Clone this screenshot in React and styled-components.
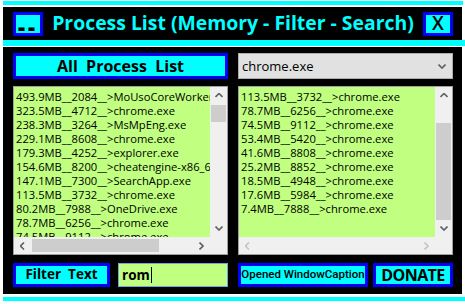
import styled, { createGlobalStyle } from 'styled-components';

const GlobalStyle = createGlobalStyle`
  html, body {
    margin: 0;
    padding: 0;
    background: #ffffff;
  }
  body {
    font-family: "Open Sans", "Noto Sans", sans-serif;
    overflow: hidden;
  }
`;

const CYAN = '#00ffff';
const BLUE = '#0000ff';
const GREEN = '#c0ff80';

const Page = styled.div`
  padding-top: 1px;
  width: 465px;
  height: 304px;
  box-sizing: border-box;
`;

const Stripe = styled.div`
  height: ${(p) => p.$h}px;
  margin-left: 3px;
  margin-right: ${(p) => p.$right || 0}px;
  margin-top: ${(p) => p.$top || 0}px;
  margin-bottom: ${(p) => p.$gap || 0}px;
  background: ${CYAN};
`;

const Frame = styled.div`
  width: 459px;
  margin-left: 3px;
  background: #000;
`;

const TitleBar = styled(Frame)`
  height: 33px;
  display: flex;
  align-items: center;
  padding: 0 9px 0 10px;
  box-sizing: border-box;
`;

const TitleButton = styled.div`
  width: 30px;
  height: 24px;
  box-sizing: border-box;
  border: 3px solid ${BLUE};
  background: ${CYAN};
  display: flex;
  align-items: center;
  justify-content: center;
  color: #000;
  font-weight: ${(p) => p.$weight || 700};
  font-size: ${(p) => p.$size}px;
  line-height: 1;
  padding-top: ${(p) => p.$pt || 0}px;
  letter-spacing: ${(p) => p.$ls || 0}px;
  font-family: "Open Sans", sans-serif;
`;

const Title = styled.div`
  flex: 1;
  text-align: center;
  color: ${CYAN};
  font-weight: 700;
  font-size: 19.4px;
  line-height: 1;
  white-space: nowrap;
  padding-bottom: 1px;
`;

const Body = styled(Frame)`
  height: 247px;
  box-sizing: border-box;
  padding: 6px 9px 6px 10px;
  display: grid;
  grid-template-columns: 215px 215px;
  grid-template-rows: 26px 169px 25px;
  column-gap: 10px;
  row-gap: 7px;
`;

const BlueButton = styled.div`
  box-sizing: border-box;
  border: 3px solid ${BLUE};
  background: ${CYAN};
  color: #000;
  display: flex;
  align-items: center;
  justify-content: center;
  white-space: pre;
  font-weight: ${(p) => p.$weight || 700};
  font-size: ${(p) => p.$size}px;
  letter-spacing: ${(p) => p.$ls || 0}px;
  font-family: ${(p) => p.$font || '"Open Sans", sans-serif'};
  width: ${(p) => (p.$w ? `${p.$w}px` : 'auto')};
  line-height: 1;
`;

const Combo = styled.div`
  box-sizing: border-box;
  border: 1px solid #adadad;
  background: #e1e1e1;
  display: flex;
  align-items: center;
  justify-content: space-between;
  padding: 0 6px 0 3px;
  font-size: 13px;
  font-weight: 500;
  color: #000;
`;

const ListBox = styled.div`
  box-sizing: border-box;
  border: 1px solid #a0a0a0;
  display: grid;
  grid-template-columns: 1fr 17px;
  grid-template-rows: 1fr 17px;
  overflow: hidden;
`;

const Items = styled.div`
  background: ${GREEN};
  overflow: hidden;
  padding: 3px 0 0 2px;
  font-size: 11.2px;
  font-weight: 500;
  line-height: 14px;
  color: #000;
`;

const Item = styled.div`
  white-space: nowrap;
`;

const ScrollTrack = styled.div`
  background: #f0f0f0;
  display: flex;
  flex-direction: ${(p) => (p.$vertical ? 'column' : 'row')};
`;

const Arrow = styled.div`
  flex: 0 0 17px;
  display: flex;
  align-items: center;
  justify-content: center;
`;

const Rail = styled.div`
  flex: 1;
  display: flex;
  flex-direction: ${(p) => (p.$vertical ? 'column' : 'row')};
  align-items: center;
`;

const Thumb = styled.div`
  background: #cdcdcd;
  flex: none;
  ${(p) =>
    p.$vertical
      ? `width: 15px; height: ${p.$size}px; margin-top: ${p.$start}px;`
      : `height: 13px; width: ${p.$size}px; margin-left: ${p.$start}px;`}
`;

const Corner = styled.div`
  background: #f0f0f0;
`;

const Row = styled.div`
  display: flex;
  gap: ${(p) => p.$gap}px;
  margin-top: 1px;
`;

const TextInput = styled.div`
  flex: 1;
  box-sizing: border-box;
  border: 1px solid #6aa6e8;
  background: ${GREEN};
  display: flex;
  align-items: center;
  padding-left: 3px;
  font-weight: 700;
  font-size: 13.5px;
  color: #000;
`;

const Caret = styled.span`
  display: inline-block;
  width: 1px;
  height: 16px;
  background: #000;
  margin-left: 1px;
`;

function Chevron({ dir, disabled }) {
  const pts = {
    up: '0,4 3.5,0.5 7,4',
    down: '0,0.5 3.5,4 7,0.5',
    left: '4,0 0.5,3.5 4,7',
    right: '0.5,0 4,3.5 0.5,7',
  }[dir];
  const vertical = dir === 'up' || dir === 'down';
  return (
    <svg width={vertical ? 8 : 5} height={vertical ? 5 : 8} viewBox={vertical ? '-0.5 0 8 5' : '0 -0.5 5 8'}>
      <polyline points={pts} fill="none" stroke={disabled ? '#c4c4c4' : '#606060'} strokeWidth="1.6" />
    </svg>
  );
}

function ScrollBar({ vertical, start, size, disabled }) {
  return (
    <ScrollTrack $vertical={vertical}>
      <Arrow>
        <Chevron dir={vertical ? 'up' : 'left'} disabled={disabled} />
      </Arrow>
      <Rail $vertical={vertical}>
        {size ? <Thumb $vertical={vertical} $start={start} $size={size} /> : null}
      </Rail>
      <Arrow>
        <Chevron dir={vertical ? 'down' : 'right'} disabled={disabled} />
      </Arrow>
    </ScrollTrack>
  );
}

function List({ items, vThumb, hThumb }) {
  return (
    <ListBox>
      <Items>
        {items.map((t, i) => (
          <Item key={i}>{t}</Item>
        ))}
      </Items>
      <ScrollBar vertical start={vThumb[0]} size={vThumb[1]} />
      <ScrollBar start={hThumb ? hThumb[0] : 0} size={hThumb ? hThumb[1] : 0} disabled={!hThumb} />
      <Corner />
    </ListBox>
  );
}

const allProcesses = [
  '493.9MB__2084__>MoUsoCoreWorker.exe',
  '323.5MB__4712__>chrome.exe',
  '238.3MB__3264__>MsMpEng.exe',
  '229.1MB__8608__>chrome.exe',
  '179.3MB__4252__>explorer.exe',
  '154.6MB__8200__>cheatengine-x86_64.exe',
  '147.1MB__7300__>SearchApp.exe',
  '113.5MB__3732__>chrome.exe',
  '80.2MB__7988__>OneDrive.exe',
  '78.7MB__6256__>chrome.exe',
  '74.5MB__9112__>chrome.exe',
  '53.4MB__5420__>chrome.exe',
];

const chromeProcesses = [
  '113.5MB__3732__>chrome.exe',
  '78.7MB__6256__>chrome.exe',
  '74.5MB__9112__>chrome.exe',
  '53.4MB__5420__>chrome.exe',
  '41.6MB__8808__>chrome.exe',
  '25.2MB__8852__>chrome.exe',
  '18.5MB__4948__>chrome.exe',
  '17.6MB__5984__>chrome.exe',
  '7.4MB__7888__>chrome.exe',
];

export default function App() {
  return (
    <Page>
      <GlobalStyle />
      <Stripe $h={4} $right={2} $gap={2} />
      <TitleBar>
        <TitleButton $size={22} $weight={800} $pt={4} $ls={3}>--</TitleButton>
        <Title>Process List (Memory - Filter - Search)</Title>
        <TitleButton $size={19} $weight={600}>X</TitleButton>
      </TitleBar>
      <Stripe $h={6} $gap={1} />
      <Body>
        <BlueButton $size={16}>{'All  Process  List'}</BlueButton>
        <Combo>
          <span>chrome.exe</span>
          <Chevron dir="down" />
        </Combo>
        <List items={allProcesses} vThumb={[1, 17]} hThumb={[1, 127]} />
        <List items={chromeProcesses} vThumb={[19, 97]} />
        <Row $gap={8}>
          <BlueButton $size={13.5} $w={97}>{'Filter  Text'}</BlueButton>
          <TextInput>
            rom<Caret />
          </TextInput>
        </Row>
        <Row $gap={5}>
          <BlueButton $size={11.5} $weight={500} $font='Roboto, sans-serif' $w={130}>
            Opened WindowCaption
          </BlueButton>
          <BlueButton $size={16} $ls={-0.6} $w={80}>DONATE</BlueButton>
        </Row>
      </Body>
      <Stripe $h={4} $top={3} />
    </Page>
  );
}
